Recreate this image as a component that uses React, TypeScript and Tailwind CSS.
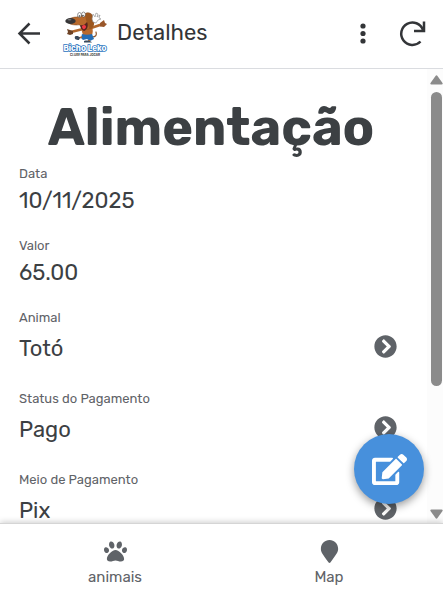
import React from "react";
import { FaChevronCircleRight, FaEdit, FaMapMarker, FaPaw } from "react-icons/fa";

type Field = { label: string; value: string; link?: boolean };

const fields: Field[] = [
  { label: "Data", value: "10/11/2025" },
  { label: "Valor", value: "65.00" },
  { label: "Animal", value: "Totó", link: true },
  { label: "Status do Pagamento", value: "Pago", link: true },
  { label: "Meio de Pagamento", value: "Pix", link: true },
];

function Logo() {
  return (
    <svg viewBox="0 0 48 48" className="h-12 w-12 shrink-0" role="img" aria-label="Bicho Leko">
      {/* tail, arms and torso */}
      <path d="M30 27c4 0 5-2 4-5" fill="none" stroke="#8b5125" strokeWidth="1.2" strokeLinecap="round" />
      <path d="M21 19 9 22M29 18l9-3" fill="none" stroke="#b0672d" strokeWidth="2.600" strokeLinecap="round" />
      <path d="M20 16h10c1 4 1 6 0 9h-9c-1-3-2-6-1-9Z" fill="#b8692c" />
      <path d="m5 19 3 1 3 1v3l-3 1-3-1 1-2Z" fill="#6e4326" />
      <path d="m38 13 4-3 1 3 2 1-3 3-4-.5Z" fill="#9a572a" />
      {/* shorts and shoes */}
      <path d="M20 24c3 1 7 1 10 0l2 5-4 2-3-2-4 1-2-2Z" fill="#246db5" />
      <path d="m17 28 3-1M27 30v2" fill="none" stroke="#b8692c" strokeWidth="1.800" />
      <path d="M13 26.500c2-1 4 0 5 1l-1 2.500c-3 0-5-1-4-3.500ZM22 31c3-1 6-.5 8 1.500h-8Z" fill="#39495c" />
      {/* head, muzzle, ear and open mouth */}
      <path d="M6 11c0-2 4-4 9-4l2-1 8-3c4-1 7 3 7 8 0 6-4 9-8 8-4-1-5-5-9-4-5 0-9-1-9-4Z" fill="#b8692c" stroke="#75431f" strokeWidth=".5" />
      <path d="M24 3c5-1 8 4 8 10 0 5-4 8-5 5-1-5-5-9-3-15Z" fill="#9c571f" />
      <path d="M18 15c3 1 5-.5 7-3 2 4 0 8-3 9-2-1-4-3-4-6Z" fill="#55251f" />
      <path d="M20 16c2-2 4-1 4 1-1 3-4 3-4-1Z" fill="#f13945" />
      <ellipse cx="8.500" cy="11" rx="5.200" ry="3" fill="#363638" />
      <ellipse cx="7.500" cy="9.700" rx="2" ry=".7" fill="#777" />
      <ellipse cx="17.500" cy="5" rx="1.900" ry="2.500" fill="#fff" stroke="#333" strokeWidth=".5" />
      <ellipse cx="21.500" cy="4.500" rx="1.900" ry="2.500" fill="#fff" stroke="#333" strokeWidth=".5" />
      <circle cx="17.500" cy="6" r=".7" fill="#222" />
      <circle cx="21" cy="5.500" r=".7" fill="#222" />
      {/* raised glove */}
      <path d="m31 4 2 3 1-4 2 1-1 3 3-2-1 3 2 1-3 1-2 3-3-1-1-3Z" fill="#fff" stroke="#888" strokeWidth=".6" />
      <text x="23" y="41" textAnchor="middle" fontFamily="Inter, sans-serif" fontSize="8" fontWeight="800" fill="#fff" stroke="#2872be" strokeWidth="1.500" paintOrder="stroke">Bicho Leko</text>
      <text x="23" y="45.500" textAnchor="middle" fontFamily="Inter, sans-serif" fontSize="3" fontWeight="700" fill="#333">CLUBE PARA JOGAR</text>
    </svg>
  );
}

export default function App() {
  return (
    <div className="flex h-screen flex-col overflow-hidden bg-white font-['Rubik','Inter',sans-serif] text-[#3c4043]">
      <header className="flex h-[69px] shrink-0 items-center border-b border-[#dadce0] pr-[14px] pl-4 text-[#333538]">
        <button type="button" aria-label="Voltar" className="flex size-7 items-center justify-center">
          <svg viewBox="0 0 28 28" className="size-7" fill="none" stroke="currentColor" strokeWidth="2.500">
            <path d="M24 13.500H4M13.500 3.500 3.500 13.500l10 10" />
          </svg>
        </button>
        <div className="ml-[18px] flex h-12 items-center">
          <Logo />
        </div>
        <h2 className="ml-[7px] flex-1 pb-[2px] text-[22px] leading-7">Detalhes</h2>
        <button type="button" aria-label="Mais opções" className="flex size-7 items-center justify-center">
          <svg viewBox="0 0 28 28" className="size-7" fill="currentColor">
            <circle cx="14" cy="6" r="2.600" />
            <circle cx="14" cy="13.500" r="2.600" />
            <circle cx="14" cy="21" r="2.600" />
          </svg>
        </button>
        <button type="button" aria-label="Atualizar" className="ml-5 flex size-8 items-center justify-center">
          <svg viewBox="0 0 32 32" className="size-8" fill="none" stroke="currentColor" strokeWidth="2.500">
            <path d="M23.500 23.500A11.200 11.200 0 1 1 26 12" />
            <path d="M27 3.500v9.500h-10" />
          </svg>
        </button>
      </header>

      <div className="relative flex min-h-0 flex-1">
        <main className="min-w-0 flex-1 overflow-hidden pr-6 pl-[19px]">
          <h1 className="mt-[31px] text-center text-[52px] leading-[54px] font-bold">Alimentação</h1>
          <dl className="mt-[10px]">
            {fields.map((f) => (
              <div key={f.label} className={f.link ? "h-[81px]" : "h-[72px]"}>
                <dt className="text-[13px] leading-5 text-[#5f6368]">{f.label}</dt>
                <dd className={f.link ? "flex h-[42px] items-center justify-between pr-[6px] text-[22px] leading-8" : "text-[22px] leading-[34px]"}>
                  <span>{f.value}</span>
                  {f.link && (
                    <button type="button" aria-label={`Abrir ${f.value}`} className="pb-[6px] text-[#5f6368]">
                      <FaChevronCircleRight size={23} />
                    </button>
                  )}
                </dd>
              </div>
            ))}
          </dl>
        </main>
        <div aria-hidden="true" className="flex w-4 shrink-0 flex-col items-center bg-[#fcfcfc] pt-[6px] pb-1 pl-[3px] text-[#8b8b8b]">
          <svg viewBox="0 0 13 10" className="h-[10px] w-[13px] shrink-0" fill="currentColor">
            <path d="M5.500 1q1-1.400 2 0l5 7q.7 1.500-1 1.500h-10q-1.700 0-1-1.500Z" />
          </svg>
          <div className="mt-[7px] flex w-full flex-1 flex-col items-center">
            <div className="h-[70.5%] w-[11px] rounded-full bg-[#8b8b8b]" />
          </div>
          <svg viewBox="0 0 13 10" className="h-[10px] w-[13px] shrink-0" fill="currentColor">
            <path d="M5.500 9q1 1.400 2 0l5-7q.7-1.500-1-1.500h-10q-1.700 0-1 1.500Z" />
          </svg>
        </div>
        <button type="button" aria-label="Editar" className="absolute right-[19px] bottom-[19px] flex size-[70px] items-center justify-center rounded-full bg-[#4790dc] text-white shadow-[0_3px_8px_rgba(0,0,0,0.4)]">
          <FaEdit size={35} />
        </button>
      </div>

      <nav className="z-10 grid h-[73px] shrink-0 grid-cols-2 border-t border-[#d5d5d5] bg-white pr-[7px] pl-2 text-[#5f6368] shadow-[0_-1px_6px_rgba(0,0,0,0.2)]">
        <a href="#animais" className="flex flex-col items-center pt-4 text-[15px] leading-5">
          <FaPaw size={23} />
          <span className="mt-1">animais</span>
        </a>
        <a href="#map" className="flex flex-col items-center pt-4 text-[15px] leading-5">
          <FaMapMarker size={23} />
          <span className="mt-1">Map</span>
        </a>
      </nav>
    </div>
  );
}
